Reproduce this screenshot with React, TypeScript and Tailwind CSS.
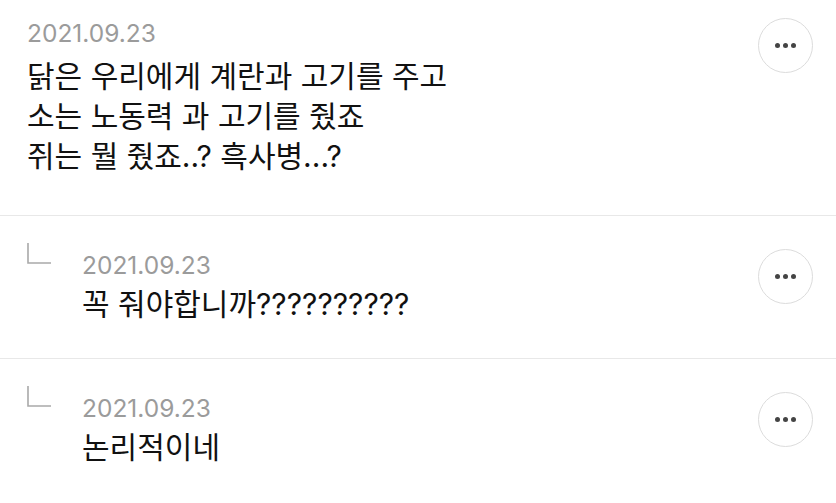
import { ReactNode } from 'react'

interface Comment {
  date: string
  lines: string[]
  reply?: boolean
}

const comments: Comment[] = [
  {
    date: '2021.09.23',
    lines: ['닭은 우리에게 계란과 고기를 주고', '소는 노동력 과 고기를 줬죠', '쥐는 뭘 줬죠..? 흑사병...?'],
  },
  { date: '2021.09.23', lines: ['꼭 줘야합니까??????????'], reply: true },
  { date: '2021.09.23', lines: ['논리적이네'], reply: true },
]

const font = { fontFamily: 'Inter, "Noto Sans CJK KR", sans-serif' }

function MoreButton() {
  return (
    <button className="w-[55px] h-[55px] flex-shrink-0 rounded-full border border-[#dcdcdc] bg-white flex items-center justify-center gap-[3px]">
      <span className="w-[5px] h-[5px] rounded-full bg-[#444]" />
      <span className="w-[5px] h-[5px] rounded-full bg-[#444]" />
      <span className="w-[5px] h-[5px] rounded-full bg-[#444]" />
    </button>
  )
}

function ReplyMark() {
  return (
    <svg width="24" height="21" viewBox="0 0 24 21" className="block flex-shrink-0 mt-[-6px]">
      <path d="M1 0 V20 H24" fill="none" stroke="#a9a9a9" strokeWidth="1.6" />
    </svg>
  )
}

function Row({ c, first }: { c: Comment; first: boolean }) {
  let body: ReactNode = (
    <div className="flex-1 min-w-0">
      <p className="text-[24.5px] leading-[32px] text-[#9b9b9b]">{c.date}</p>
      <div className={c.reply ? 'mt-[3px]' : 'mt-[7px]'}>
        {c.lines.map((l) => (
          <p key={l} className="text-[30px] leading-[40px] text-[#111] whitespace-pre">
            {l}
          </p>
        ))}
      </div>
    </div>
  )

  return (
    <div
      className={`flex items-start pl-[27px] pr-[23px] ${
        first ? 'pt-[17px] pb-[39px]' : 'pt-[33px] pb-[34px] border-t border-[#e8e8e8]'
      }`}
    >
      {c.reply && (
        <div className="w-[55px] flex-shrink-0">
          <ReplyMark />
        </div>
      )}
      {body}
      <div className={first ? 'pt-[1px]' : ''}>
        <MoreButton />
      </div>
    </div>
  )
}

export default function App() {
  return (
    <div className="w-[836px] h-[503px] bg-white overflow-hidden" style={font}>
      {comments.map((c, i) => (
        <Row key={i} c={c} first={i === 0} />
      ))}
    </div>
  )
}
